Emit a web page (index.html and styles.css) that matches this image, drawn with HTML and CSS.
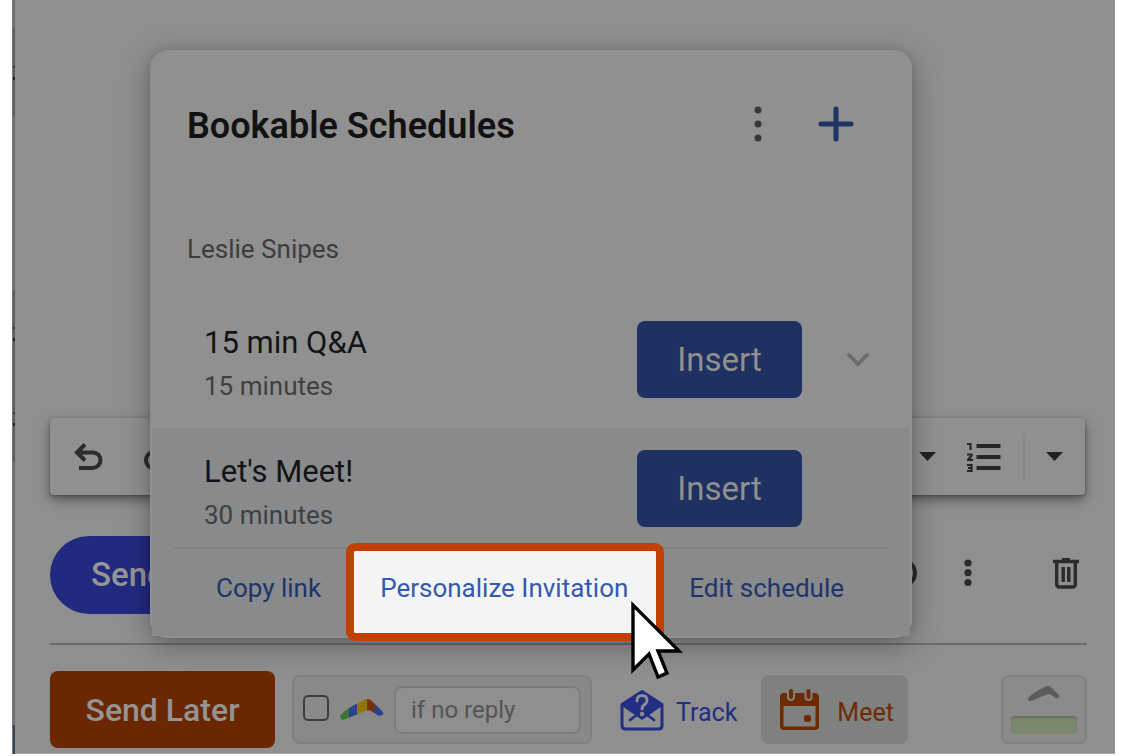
FILE: index.html
```html
<!DOCTYPE html>
<html lang="en">
<head>
  <meta charset="UTF-8" />
  <meta name="viewport" content="width=device-width, initial-scale=1.0"/>
  <title>Bookable Schedules</title>
  <link rel="stylesheet" href="styles.css">
</head>
<body>

<main class="window">
  <div class="inbox-edge"></div>

  <section class="compose">
    <!-- Formatting toolbar -->
    <div class="toolbar">
      <button type="button" class="icon-btn undo" aria-label="Undo">
        <svg width="30" height="28" viewBox="0 0 30 28" fill="none" stroke="#2c2c2c" stroke-width="4"><path d="M11 1.500L3 9.500l8 8M3 9.500h16a7.500 7.500 0 0 1 7.500 7.500v0a8 8 0 0 1-8 8H5"/></svg>
      </button>
      <button type="button" class="icon-btn redo" aria-label="Redo">
        <svg width="30" height="28" viewBox="0 0 30 28" fill="none" stroke="#2c2c2c" stroke-width="4"><path d="M19 1.500l8 8-8 8M27 9.500H10a8 8 0 0 0 0 15.500h15"/></svg>
      </button>
      <button type="button" class="icon-btn caret-first" aria-label="Alignment options">
        <svg width="18" height="10" viewBox="0 0 18 10"><path d="M0 0h17L8.500 9z" fill="#222"/></svg>
      </button>
      <button type="button" class="icon-btn list" aria-label="Numbered list">
        <svg width="34" height="30" viewBox="0 0 34 30" fill="none" stroke="#262626"><path d="M9.500 4h24M9.500 15h24M9.500 26h24" stroke-width="4"/><path d="M0 2h3.500V8M0 12.500h4.500v1L1 17.800h5M0 23h4.500v6H0M1 26h3" stroke-width="2.200"/></svg>
      </button>
      <span class="divider"></span>
      <button type="button" class="icon-btn" aria-label="More formatting">
        <svg width="18" height="10" viewBox="0 0 18 10"><path d="M0 0h17L8.500 9z" fill="#222"/></svg>
      </button>
    </div>

    <!-- Send row -->
    <div class="send-row">
      <button type="button" class="send-btn">Send</button>
      <button type="button" class="icon-btn confidential" aria-label="Confidential mode">
        <svg width="30" height="30" viewBox="0 0 30 30"><circle cx="15" cy="15" r="13" fill="none" stroke="#292b2c" stroke-width="4"/></svg>
      </button>
      <button type="button" class="icon-btn more" aria-label="More options">
        <svg width="8" height="28" viewBox="0 0 8 28" fill="#292b2c"><circle cx="4" cy="4" r="3.600"/><circle cx="4" cy="13.700" r="3.600"/><circle cx="4" cy="23.500" r="3.600"/></svg>
      </button>
      <button type="button" class="icon-btn trash" aria-label="Discard draft">
        <svg width="26" height="31" viewBox="0 0 26 31" fill="none" stroke="#292b2c"><path d="M0 3.500h26M9 1.500h8" stroke-width="3.400"/><path d="M3.700 4v22.500a2.500 2.500 0 0 0 2.500 2.500h13.600a2.500 2.500 0 0 0 2.500-2.500V4" stroke-width="3.400"/><path d="M10.200 9v15M15.800 9v15" stroke-width="3.400"/></svg>
      </button>
    </div>

    <!-- Extension bar -->
    <div class="extension-row">
      <button type="button" class="later-btn">Send Later</button>

      <div class="reply-box">
        <input type="checkbox" class="reply-check" id="replyCheck" aria-label="Remind me if no reply">
        <svg class="boomerang" width="44" height="22" viewBox="0 0 44 22">
          <clipPath id="wing"><path d="M0 17Q5 10 23 1.500q5-3 9 .5l11 11q1 4.500-5 3.500l-6-4q-4-2.500-8 0L7 19.500Q5 21 1 20.500z"/></clipPath>
          <g clip-path="url(#wing)">
            <path d="M0 0h10v22H0z" fill="#3a7430"/>
            <path d="M9 0h8v22H9z" fill="#29448a"/>
            <path d="M17 0h10v22H17z" fill="#8c7700"/>
            <path d="M27 0h8v22h-8z" fill="#7a3106"/>
            <path d="M35 0h9v22H33z" fill="#29448a"/>
          </g>
        </svg>
        <input type="text" class="reply-input" placeholder="if no reply" aria-label="Reminder condition">
      </div>

      <button type="button" class="track-btn">
        <svg width="44" height="42" viewBox="0 0 44 42">
          <path d="M22 2.500L42 15.500v21q0 3.500-3.500 3.500h-33Q2 40 2 36.500v-21z" fill="none" stroke="#222e84" stroke-width="3" stroke-linejoin="round"/>
          <path d="M22 2L42 15v2L22 31 2 17v-2z" fill="#222e84"/>
          <path d="M10 31l8-6M34 31l-8-6" stroke="#222e84" stroke-width="2.800" stroke-linecap="round"/>
          <path d="M17 12q0-5.500 5-5.500t5 5q0 2.500-3 4.500-2 1.300-2 4" fill="none" stroke="#8f8f8f" stroke-width="2.800" stroke-linecap="round"/>
          <circle cx="22" cy="25" r="2.200" fill="#8f8f8f"/>
        </svg>
        <span>Track</span>
      </button>

      <button type="button" class="meet-btn">
        <svg width="40" height="42" viewBox="0 0 40 42">
          <path d="M4 4h31q4 0 4 4v29q0 4-4 4H4q-4 0-4-4V8q0-4 4-4z" fill="#6e2b01"/>
          <path d="M3.500 17h32v20.500h-32z" fill="#7f8181"/>
          <rect x="7" y="-2" width="8" height="14" rx="4" fill="#7f8181"/>
          <rect x="24.500" y="-2" width="8" height="14" rx="4" fill="#7f8181"/>
          <rect x="9" y="0" width="4" height="10" rx="2" fill="#6e2b01"/>
          <rect x="26.500" y="0" width="4" height="10" rx="2" fill="#6e2b01"/>
          <rect x="24" y="26" width="7" height="7" rx="2.500" fill="#6e2b01"/>
        </svg>
        <span>Meet</span>
      </button>

      <button type="button" class="meter-box" aria-label="Respondable">
        <svg width="32" height="16" viewBox="0 0 44 22"><path d="M0 17Q5 10 23 1.500q5-3 9 .5l11 11q1 4.500-5 3.500l-6-4q-4-2.500-8 0L7 19.500Q5 21 1 20.500z" fill="#5b5b5b"/></svg>
        <span class="meter"></span>
      </button>
    </div>

    <!-- Bookable schedules menu -->
    <div class="popup">
      <header class="popup-header">
        <h2>Bookable Schedules</h2>
        <button type="button" class="icon-btn" aria-label="Schedule options">
          <svg width="8" height="36" viewBox="0 0 8 36" fill="#373737"><circle cx="4" cy="4" r="3.500"/><circle cx="4" cy="18" r="3.500"/><circle cx="4" cy="32" r="3.500"/></svg>
        </button>
        <button type="button" class="icon-btn add" aria-label="Add schedule">
          <svg width="36" height="36" viewBox="0 0 36 36"><path d="M18 3v30M3 18h30" stroke="#1f3364" stroke-width="5" stroke-linecap="round"/></svg>
        </button>
      </header>

      <p class="owner">Leslie Snipes</p>

      <div class="schedule">
        <div class="schedule-info">
          <h3>15 min Q&amp;A</h3>
          <p>15 minutes</p>
        </div>
        <button type="button" class="insert-btn">Insert</button>
        <button type="button" class="icon-btn expand" aria-label="Expand">
          <svg width="22" height="14" viewBox="0 0 22 14"><path d="M2 2l9 9 9-9" fill="none" stroke="#6b6b6b" stroke-width="3.800" stroke-linecap="round"/></svg>
        </button>
      </div>

      <div class="selected">
        <div class="schedule">
          <div class="schedule-info">
            <h3>Let's Meet!</h3>
            <p>30 minutes</p>
          </div>
          <button type="button" class="insert-btn">Insert</button>
        </div>
        <div class="links">
          <a href="#">Copy link</a>
          <a href="#" class="highlight">Personalize Invitation
            <svg class="cursor" width="60" height="84" viewBox="0 0 60 84"><path d="M4 7v65l16-16 9 23 9-4-9-22h21z" fill="#fff" stroke="#000" stroke-width="3.400"/></svg>
          </a>
          <a href="#">Edit schedule</a>
        </div>
      </div>
    </div>
  </section>
</main>

</body>
</html>
```
FILE: styles.css
```css
* {
  box-sizing: border-box;
  font-family: Roboto, sans-serif;
}

body {
  margin: 0;
  background: #fff;
}

h2,
h3,
p {
  margin: 0;
}

button {
  border: none;
  padding: 0;
  cursor: pointer;
}

svg {
  display: block;
  flex: none;
}

.window {
  display: flex;
  min-height: calc(100vh - 2px);
  margin: 0 7px 0 12px;
}

/* sliver of the message list behind the compose window */
.inbox-edge {
  width: 3px;
  border-left: 1px solid #75767a;
  background: linear-gradient(#707174 0 28px, #5c5d60 28px 66px, #333 66px 68px, #5c5d60 68px 77px, #222 77px 80px, #5c5d60 80px 116px, #707174 116px 290px, #5c5d60 290px 327px, #333 327px 329px, #5c5d60 329px 338px, #222 338px 341px, #5c5d60 341px 412px, #333 412px 414px, #5c5d60 414px 423px, #222 423px 426px, #5c5d60 426px 462px, #707174 462px 725px, #3b4350 725px);
}

.compose {
  position: relative;
  flex: 1;
  display: flex;
  flex-direction: column;
  justify-content: flex-end;
  padding: 0 28px 5px 35px;
  background: #8f8f8f;
  border-bottom: 1px solid #a9a9a9;
}

.icon-btn {
  background: none;
}

.toolbar {
  display: flex;
  align-items: center;
  height: 77px;
  margin-right: 2px;
  padding: 0 21px 0 24px;
  border-radius: 4px;
  background: #909090;
  box-shadow: 0 5px 12px rgba(0,0,0,0.4), 0 1px 3px rgba(0,0,0,0.3);
}

.redo {
  margin-left: 38px;
}

.caret-first {
  margin-left: auto;
}

.list {
  margin-left: 30px;
}

.divider {
  width: 2px;
  height: 44px;
  margin: 0 21px 0 22px;
  background: #868686;
}

.send-row {
  display: flex;
  align-items: center;
  margin: 41px 0 26px;
  padding-bottom: 29px;
  border-bottom: 2px solid #6c6c6c;
}

.send-row .icon-btn {
  padding-bottom: 4px;
}

.send-btn {
  width: 225px;
  height: 78px;
  padding: 0 0 2px 41px;
  border-radius: 39px;
  background: #222a80;
  color: #969696;
  font-size: 33px;
  font-weight: 500;
  text-align: left;
}

.confidential {
  margin-left: auto;
}

.more {
  margin-left: 47px;
}

.trash {
  margin: 0 8px 0 81px;
}

.extension-row {
  display: flex;
  align-items: center;
  height: 77px;
}

.later-btn {
  width: 225px;
  height: 77px;
  border-radius: 8px;
  background: #6b2800;
  color: #949494;
  font-size: 32px;
  font-weight: 500;
}

.reply-box {
  display: flex;
  align-items: center;
  height: 69px;
  margin-left: 17px;
  padding: 0 9px;
  border: 2px solid #808080;
  border-radius: 8px;
  background: #898989;
}

.reply-check {
  appearance: none;
  width: 26px;
  height: 26px;
  margin: 0 11px 4px 0;
  border: 2px solid #3c3c3c;
  border-radius: 5px;
}

.reply-input {
  width: 187px;
  height: 48px;
  margin-left: 10px;
  padding: 0 15px;
  border: 2px solid #7c7d81;
  border-radius: 8px;
  background: #8f8f8f;
  font-size: 24px;
}

.reply-input::placeholder {
  color: #545454;
}

.track-btn,
.meet-btn {
  display: flex;
  align-items: center;
  font-size: 25px;
}

.track-btn span,
.meet-btn span {
  padding-top: 6px;
}

.track-btn {
  gap: 12px;
  margin-left: 28px;
  background: none;
  color: #222e84;
}

.meet-btn {
  gap: 17px;
  height: 69px;
  margin-left: 24px;
  padding: 0 14px 0 19px;
  border-radius: 8px;
  background: #7f8181;
  color: #6e2b01;
}

.meter-box {
  display: flex;
  flex-direction: column;
  align-items: center;
  width: 86px;
  height: 69px;
  margin-left: auto;
  padding-top: 9px;
  border: 2px solid #808080;
  border-radius: 8px;
  background: #8b8b8b;
}

.meter {
  width: 66px;
  height: 18px;
  margin-top: 14px;
  border-radius: 4px;
  background: #7b876f;
  box-shadow: inset 0 2px 2px #68725f;
}

.popup {
  position: absolute;
  top: 50px;
  left: 135px;
  right: 203px;
  padding: 2px;
  border-radius: 18px;
  background: #909090;
  box-shadow: 0 8px 30px rgba(0,0,0,0.3), 0 0 8px rgba(0,0,0,0.12);
}

.popup-header {
  display: flex;
  align-items: center;
  height: 144px;
  padding: 0 56px 0 35px;
}

.popup-header h2 {
  margin-right: auto;
  padding-top: 4px;
  font-size: 36px;
  font-weight: 600;
  color: #121212;
}

.add {
  margin-left: 56px;
}

.owner {
  padding: 36px 0 33px 35px;
  font-size: 26px;
  line-height: 34px;
  color: #3c3d3f;
}

.schedule {
  display: flex;
  align-items: flex-start;
  padding: 22px 108px 21px 52px;
}

.schedule-info {
  flex: 1;
}

.schedule h3 {
  font-size: 31px;
  font-weight: 400;
  line-height: 44px;
  color: #131416;
}

.schedule p {
  font-size: 26px;
  line-height: 42px;
  color: #3e4042;
}

.insert-btn {
  width: 165px;
  height: 77px;
  border-radius: 8px;
  background: #1f3161;
  color: #909090;
  font-size: 33px;
}

.expand {
  width: 22px;
  margin: 32px -67px 0 45px;
}

.selected {
  background: #888a8c;
}

.selected .schedule {
  padding-bottom: 11px;
}

.links {
  display: flex;
  align-items: center;
  gap: 33px;
  height: 89px;
  margin: 0 22px;
  padding: 0 42px 2px;
  border-top: 2px solid #808284;
}

.links a {
  padding-bottom: 8px;
  font-size: 26px;
  line-height: 74px;
  color: #1f3569;
  text-decoration: none;
  white-space: nowrap;
}

.links .highlight {
  position: relative;
  padding: 0 28px 8px 26px;
  background: #f3f4f6;
  color: #3559ac;
  outline: 8px solid #c24100;
  border-radius: 1px;
}

.cursor {
  position: absolute;
  top: 47px;
  right: -33px;
}
```
